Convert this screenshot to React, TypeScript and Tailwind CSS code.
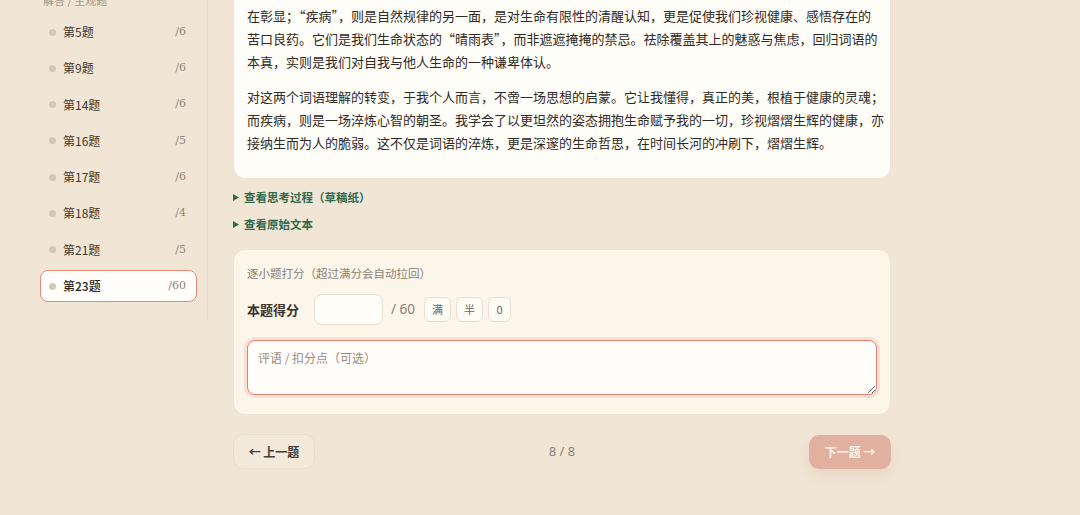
import React from "react";

const questions = [
  { id: 5, max: 6 },
  { id: 9, max: 6 },
  { id: 14, max: 6 },
  { id: 16, max: 5 },
  { id: 17, max: 6 },
  { id: 18, max: 4 },
  { id: 21, max: 5 },
  { id: 23, max: 60 },
];

const paragraphs = [
  [
    "在彰显；“疾病”，则是自然规律的另一面，是对生命有限性的清醒认知，更是促使我们珍视健康、感悟存在的",
    "苦口良药。它们是我们生命状态的“晴雨表”，而非遮遮掩掩的禁忌。祛除覆盖其上的魅惑与焦虑，回归词语的",
    "本真，实则是我们对自我与他人生命的一种谦卑体认。",
  ],
  [
    "对这两个词语理解的转变，于我个人而言，不啻一场思想的启蒙。它让我懂得，真正的美，根植于健康的灵魂；",
    "而疾病，则是一场淬炼心智的朝圣。我学会了以更坦然的姿态拥抱生命赋予我的一切，珍视熠熠生辉的健康，亦",
    "接纳生而为人的脆弱。这不仅是词语的淬炼，更是深邃的生命哲思，在时间长河的冲刷下，熠熠生辉。",
  ],
];

const cjk = { fontFamily: '"Noto Sans CJK SC", "Noto Sans", sans-serif' };
const serif = { fontFamily: '"DejaVu Serif", "Liberation Serif", serif' };

function Sidebar() {
  const active = 23;
  return (
    <aside className="w-[208px] shrink-0 self-start border-r border-[#e9dcc7] pl-10 pr-[10px] pb-[18px] -mt-[8px]">
      <div className="h-4 pl-[3px] text-[11px] leading-4 text-[#a39887]">解答 / 主观题</div>
      <ul className="mt-2 flex flex-col gap-[4.3px]">
        {questions.map((q) => {
          const on = q.id === active;
          return (
            <li
              key={q.id}
              className={
                on
                  ? "flex h-8 items-center rounded-[8px] border-[1.5px] border-[#e8877a] bg-[#fffdf9] pl-[8px] pr-[10px]"
                  : "flex h-8 items-center rounded-[8px] border-[1.5px] border-transparent pl-[8px] pr-[10px]"
              }
            >
              <span className="h-[7px] w-[7px] rounded-full bg-[#d4c8b3]" />
              <span
                className={
                  on
                    ? "ml-[7px] text-[12px] font-medium text-[#2e2822]"
                    : "ml-[7px] text-[12px] text-[#3f372f]"
                }
              >
                第{q.id}题
              </span>
              <span className="ml-auto text-[11px] text-[#8f8579]" style={serif}>
                /{q.max}
              </span>
            </li>
          );
        })}
      </ul>
    </aside>
  );
}

function Toggle({ label }: { label: string }) {
  return (
    <div className="flex h-[27px] items-center gap-[5px] text-[11.5px] font-semibold text-[#2f6a4e]">
      <svg width="6" height="7" viewBox="0 0 6 7" className="shrink-0">
        <path d="M0 0 L6 3.5 L0 7 Z" fill="#2f6a4e" />
      </svg>
      <span>{label}</span>
    </div>
  );
}

function ScoreButton({ label }: { label: string }) {
  return (
    <button className="flex h-[25px] min-w-[23px] items-center justify-center rounded-[6px] border border-[#eadfcc] bg-[#fffcf6] px-[7px] text-[11px] text-[#6d645b]">
      {label}
    </button>
  );
}

function Main() {
  return (
    <main className="ml-[25px] w-[658px] shrink-0 -mt-[10px]">
      <section
        lang="zh-CN"
        className="rounded-b-[12px] border border-t-0 border-[#eee2cf] bg-[#fffdf8] pb-[24px] pl-[13px] pr-[14px] pt-[14px] text-[13px] leading-[23px] text-[#2f2a25]"
      >
        {paragraphs.map((lines, i) => (
          <p key={i} className={i === 0 ? "mb-3" : ""}>
            {lines.map((line, j) => (
              <span key={j} className="block whitespace-nowrap">
                {line}
              </span>
            ))}
          </p>
        ))}
      </section>

      <div className="mt-[5px]">
        <Toggle label="查看思考过程（草稿纸）" />
        <Toggle label="查看原始文本" />
      </div>

      <section className="mt-[11px] rounded-[12px] border border-[#efe4d2] bg-[#fcf5ea] px-[13px] pb-[19px] pt-[14px]">
        <div className="text-[11.5px] leading-[18px] text-[#8b8178]">逐小题打分（超过满分会自动拉回）</div>
        <div className="mt-[12px] flex items-center">
          <span className="w-[67px] text-[13px] font-bold text-[#3b332b]">本题得分</span>
          <input
            className="h-[31px] w-[69px] rounded-[8px] border border-[#eadfcd] bg-[#fffdf8] px-2 text-[13px] outline-none"
            style={cjk}
          />
          <span className="ml-[8px] text-[13.5px] text-[#8a7f76]" style={{ fontFamily: '"Noto Sans", sans-serif' }}>
            / 60
          </span>
          <div className="ml-[9px] flex gap-[5px]">
            <ScoreButton label="满" />
            <ScoreButton label="半" />
            <ScoreButton label="0" />
          </div>
        </div>
        <textarea
          placeholder="评语 / 扣分点（可选）"
          className="mt-[15px] block h-[55px] w-full resize-y rounded-[8px] border-[1.5px] border-[#e5806f] bg-[#fffdf9] px-[10px] py-[8px] text-[12px] leading-[18px] text-[#3b332b] shadow-[0_0_0_3px_rgba(232,135,122,0.18)] outline-none placeholder:text-[#978c82]"
          style={cjk}
        />
      </section>

      <nav className="mt-[19px] flex items-center justify-between">
        <button className="flex h-[35px] w-[82px] items-center justify-center rounded-[10px] border border-[#ebdec8] bg-[#f3e9da] text-[12px] font-bold text-[#463c33]">
          ← 上一题
        </button>
        <span className="text-[13px] text-[#8c8178]" style={{ fontFamily: '"Noto Sans", sans-serif' }}>
          8 / 8
        </span>
        <button className="flex h-[34px] w-[82px] items-center justify-center rounded-[10px] bg-[#e1b09f] text-[12px] font-bold text-[#fdf3ee] shadow-[0_6px_14px_rgba(200,140,120,0.2)]">
          下一题 →
        </button>
      </nav>
    </main>
  );
}

export default function App() {
  return (
    <div className="h-[515px] w-full overflow-hidden bg-[#f1e6d5]" style={cjk}>
      <div className="flex">
        <Sidebar />
        <Main />
      </div>
    </div>
  );
}
